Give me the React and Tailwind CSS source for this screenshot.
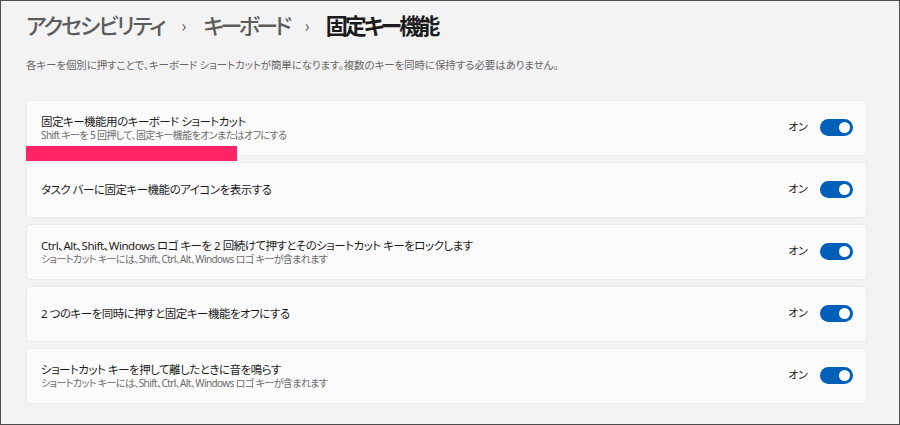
import React from "react";

const rows = [
  { title: "固定キー機能用のキーボード ショートカット", sub: "Shift キーを 5 回押して、固定キー機能をオンまたはオフにする" },
  { title: "タスク バーに固定キー機能のアイコンを表示する" },
  { title: "Ctrl、Alt、Shift、Windows ロゴ キーを 2 回続けて押すとそのショートカット キーをロックします", sub: "ショートカット キーには、Shift、Ctrl、Alt、Windows ロゴ キーが含まれます" },
  { title: "2 つのキーを同時に押すと固定キー機能をオフにする" },
  { title: "ショートカット キーを押して離したときに音を鳴らす", sub: "ショートカット キーには、Shift、Ctrl、Alt、Windows ロゴ キーが含まれます" },
];

function Toggle() {
  return (
    <div className="w-[33px] h-[17px] rounded-full bg-[#005fb8] flex items-center justify-end pr-[3px]">
      <div className="w-[11px] h-[11px] rounded-full bg-white" />
    </div>
  );
}

export default function App() {
  return (
    <div
      className="w-[900px] h-[425px] bg-[#f3f3f3] border border-[#4d4d4d] relative overflow-hidden [font-feature-settings:'palt']"
      style={{ fontFamily: '"Noto Sans CJK JP", "Noto Sans", sans-serif' }}
    >
      <div className="pl-[25px] pr-[32px]">
        <div className="h-[46px] flex items-center text-[22px] leading-none tracking-[-2px]">
          <span className="text-[#5c5c5c] font-medium">アクセシビリティ</span>
          <span className="text-[#5c5c5c] text-[17px] mx-[17px] tracking-normal">›</span>
          <span className="text-[#5c5c5c] font-medium tracking-[-3.5px]">キーボード</span>
          <span className="text-[#5c5c5c] text-[17px] mx-[16px] tracking-normal">›</span>
          <span className="text-[#1b1b1b] font-semibold tracking-[-3px]">固定キー機能</span>
        </div>
        <div className="mt-[13px] text-[10.5px] text-[#666] leading-none tracking-[-0.1px]">
          各キーを個別に押すことで、キーボード ショートカットが簡単になります。複数のキーを同時に保持する必要はありません。
        </div>
        <div
          className="mt-[29px] flex flex-col gap-[6px]"
          style={{ fontFamily: '"Noto Sans", "Noto Sans CJK JP", sans-serif' }}
        >
          {rows.map((r, i) => (
            <div
              key={i}
              className="h-[56px] bg-[#fbfbfb] border border-[#ebebeb] rounded-[4px] flex items-center pl-[14px] pr-[13px]"
            >
              <div className="flex-1 flex flex-col justify-center">
                <div className="text-[11.5px] text-[#1b1b1b] leading-[15px] tracking-[-0.5px]">{r.title}</div>
                {r.sub && (
                  <div className="text-[10px] text-[#6b6b6b] leading-[13px] tracking-[-0.6px]">{r.sub}</div>
                )}
              </div>
              <span className="text-[11px] text-[#1b1b1b] mr-[12px]">オン</span>
              <Toggle />
            </div>
          ))}
        </div>
      </div>
      <div className="absolute left-[25px] top-[145px] w-[211px] h-[15px] bg-[#fe2466]" />
    </div>
  );
}
